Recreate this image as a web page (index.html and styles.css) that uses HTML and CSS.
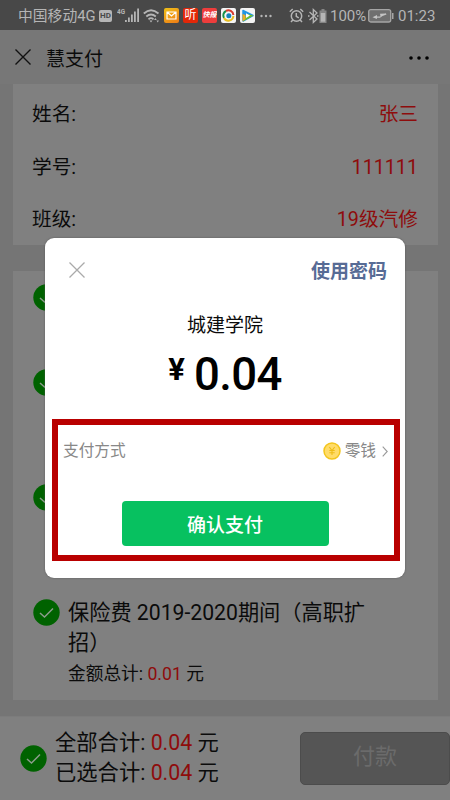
FILE: index.html
```html
<!DOCTYPE html>
<html lang="zh-CN">
<head>
<meta charset="utf-8">
<title>慧支付</title>
<link rel="stylesheet" href="styles.css">
</head>
<body>
<svg width="0" height="0" class="defs">
  <symbol id="check" viewBox="0 0 27 27"><circle cx="13.5" cy="13.5" r="13.2" fill="#006200"/><path d="M7 14l4.500 4L20 9.500" fill="none" stroke="#8c9c8c" stroke-width="1.500"/></symbol>
</svg>
<div class="screen">
  <header class="status">
    <span class="carrier">中国移动4G</span>
    <span class="hd">HD</span>
    <svg class="signal" width="24" height="16" viewBox="0 0 24 16"><text x="0" y="7" font-size="7.500" font-weight="700" textLength="8" lengthAdjust="spacingAndGlyphs" fill="#b5b5b5">4G</text><g fill="#b5b5b5"><path d="M8 13h1.800v2H8zM11 10.500h1.800V15H11zM14 7.500h1.800V15H14zM17 4.500h1.800V15H17zM20.200 1.500H22V15h-1.800z"/></g></svg>
    <svg class="wifi" width="17" height="16" viewBox="0 0 17 16"><g fill="none" stroke="#b5b5b5" stroke-width="1.800"><path d="M.8 5.500Q8 -1 15.500 5.500M3.300 8.500Q8 4.500 12.800 8.500M5.500 11.300Q8 9 10.500 11.300"/></g><path d="M6.500 12.600h3L8 14.500zM11 12l1.500-2 1.200 2zM13.500 12.500h2.500L14.700 14.500z" fill="#b5b5b5"/></svg>
    <span class="app mail"><svg width="15" height="15" viewBox="0 0 15 15"><path d="M3 4h9v7H3zM3 4l4.500 4L12 4" fill="none" stroke="#fff" stroke-width="1.200"/></svg></span>
    <span class="app listen">听</span>
    <span class="app quick">快报</span>
    <span class="app white"><svg width="15" height="15" viewBox="0 0 15 15"><g fill="none" stroke-width="2"><path d="M3 10A5 5 0 0 1 5 3" stroke="#168f48"/><path d="M5 3A5 5 0 0 1 12.400 7" stroke="#d73a2d"/><path d="M12.400 8A5 5 0 0 1 3 10" stroke="#e8bd20"/></g><circle cx="7.800" cy="7.800" r="2.500" fill="#1583ba"/></svg></span>
    <span class="app white"><svg width="15" height="15" viewBox="0 0 15 15"><path d="M3 2.500L13 7.500 3 13z" fill="#2396e5" stroke="#2396e5" stroke-width="1.500" stroke-linejoin="round"/><path d="M3 13.500L13.500 7.500 7 6z" fill="#74be28"/><path d="M2.500 6l3 1v4l-3 2.500z" fill="#efac24"/><path d="M6 5.300l4 2.300-4 2.400z" fill="#fff"/></svg></span>
    <svg class="more" width="12" height="4" viewBox="0 0 12 4"><g fill="#b5b5b5"><circle cx="1.500" cy="2" r="1.200"/><circle cx="6" cy="2" r="1.200"/><circle cx="10.500" cy="2" r="1.200"/></g></svg>
    <svg class="alarm" width="15" height="15" viewBox="0 0 15 15"><g fill="none" stroke="#b5b5b5" stroke-width="1.500"><circle cx="7.500" cy="8" r="5.200"/><path d="M7.300 5v3.300l2.500 1.600M.8 3.700L3.700 1M14.200 3.700L11.300 1M3.800 12L2 14M11.200 12l1.800 2"/></g></svg>
    <svg class="bt" width="19" height="16" viewBox="0 0 19 16"><path d="M1.500 4l7.500 7-3.700 3.500V1.500L9 5l-7.500 7M0 8h1.500M9 8h1.500" fill="none" stroke="#b5b5b5" stroke-width="1.300"/><path d="M13.500 1h3v1.500h2V15h-7V2.500h2z" fill="#858585"/><path d="M12.800 5h4.400v8.700h-4.400z" fill="#b5b5b5"/></svg>
    <span class="percent">100%</span>
    <svg class="battery" width="26" height="14" viewBox="0 0 26 14"><rect x=".7" y=".7" width="22" height="12.300" rx="2" fill="#6f6f6f" stroke="#a5a5a5" stroke-width="1.300"/><path d="M24 4h1.500v6H24z" fill="#a5a5a5"/><path d="M4.500 8.300L9 6v1.400h3.500L12 4.800l5.500-.3V3.800L18.500 5.500l-4 1.500L12 8.700H9V10z" fill="#c4c4c4"/></svg>
    <span class="clock">01:23</span>
  </header>
  <nav class="nav">
    <svg width="18" height="18" viewBox="0 0 18 18"><path d="M1.500 1.500l15 15M16.500 1.500l-15 15" stroke="#111" stroke-width="1.400"/></svg>
    <span class="title">慧支付</span>
    <svg class="dots" width="20" height="6" viewBox="0 0 20 6"><circle cx="2" cy="3" r="1.800"/><circle cx="10" cy="3" r="1.800"/><circle cx="18" cy="3" r="1.800"/></svg>
  </nav>
  <main class="content">
    <section class="card info">
      <div class="row"><span>姓名:</span><span class="val">张三</span></div>
      <div class="row"><span>学号:</span><span class="val">111111</span></div>
      <div class="row"><span>班级:</span><span class="val">19级汽修</span></div>
    </section>
    <section class="card fees">
      <div class="fee short"><svg class="check"><use href="#check"/></svg></div>
      <div class="fee tall"><svg class="check"><use href="#check"/></svg></div>
      <div class="fee tall"><svg class="check"><use href="#check"/></svg></div>
      <div class="fee"><svg class="check"><use href="#check"/></svg>
        <div class="desc"><div class="name">保险费 2019-2020期间（高职扩<br>招）</div><div class="sum">金额总计: <b>0.01</b> 元</div></div>
      </div>
    </section>
  </main>
  <footer class="footer">
    <svg class="check"><use href="#check"/></svg>
    <div class="totals"><div>全部合计: <b>0.04</b> 元</div><div>已选合计: <b>0.04</b> 元</div></div>
    <div class="pay">付款</div>
  </footer>
  <section class="modal">
    <div class="modal-head">
      <svg width="18" height="18" viewBox="0 0 18 18"><path d="M1.500 1.500l15 15M16.500 1.500l-15 15" stroke="#aaa" stroke-width="1.300"/></svg>
      <span class="pwd">使用密码</span>
    </div>
    <div class="payee">城建学院</div>
    <div class="amount"><span class="yen">¥</span><span class="figure">0.04</span></div>
    <div class="frame">
      <div class="method"><span>支付方式</span>
        <span class="wallet"><svg width="18" height="18" viewBox="0 0 18 18"><circle cx="9" cy="9" r="8" fill="#ffdc69" stroke="#f3c51c" stroke-width="1.500"/><path d="M6.300 5L9 8.500 11.700 5M9 8.500V13M6.300 8.500h5.400M6.300 10.700h5.400" fill="none" stroke="#eebd18" stroke-width="1.100"/></svg><span>零钱</span><svg class="arrow" width="6" height="11" viewBox="0 0 6 11"><path d="M.7.7l4.500 4.800L.7 10.300" fill="none" stroke="#999" stroke-width="1.100"/></svg></span>
      </div>
      <div class="confirm">确认支付</div>
    </div>
  </section>
</div>
</body>
</html>
```
FILE: styles.css
```css
* { box-sizing: border-box; }
body { margin: 0; font-family: Roboto, "Noto Sans CJK SC", sans-serif; color: #0b0b0b; }
b { font-weight: 400; color: #8e0c0c; }
svg { display: block; flex: none; }
.defs { position: absolute; }
.screen { position: relative; width: 450px; height: 800px; overflow: hidden; background: #757575; display: flex; flex-direction: column; }
.status { height: 30px; flex: none; background: #484848; color: #b5b5b5; display: flex; align-items: center; padding: 1px 0 0 18px; white-space: nowrap; }
.carrier { width: 81px; font-size: 14.800px; line-height: 28px; padding-top: 1px; }
.hd { width: 13px; height: 12px; border-radius: 2px; background: #b5b5b5; color: #484848; font-size: 8px; line-height: 12px; font-weight: 700; text-align: center; }
.signal { margin-left: 5px; margin-top: -1px; }
.wifi { margin-left: 2px; }
.app { width: 15px; height: 15px; flex: none; margin-left: 4px; border-radius: 2px; color: #fff; text-align: center; overflow: hidden; line-height: 15px; }
.mail { background: linear-gradient(150deg, #efc019, #ef7b16); }
.listen { background: #e32708; font-size: 12px; }
.quick { background: #ed3d3c; font-size: 7px; font-style: italic; font-weight: 700; }
.white { background: #f4f4f4; }
.more { margin-left: 5px; }
.alarm { margin-left: 17px; }
.bt { margin-left: 4px; }
.percent { width: 36px; margin-left: 3px; font-size: 15px; padding-top: 1px; }
.battery { margin-left: 2px; }
.clock { margin-left: 4px; font-size: 15px; padding-top: 1px; }
.nav { height: 54px; flex: none; background: #777; display: flex; align-items: center; padding: 0 21px 0 14px; }
.title { margin-left: 14px; margin-top: 5px; font-size: 19px; line-height: 28px; font-weight: 400; }
.dots { margin-left: auto; margin-top: 2px; }
.content { flex: 1; }
.card { margin: 0 12px 0 13px; background: #808080; }
.info { height: 161px; padding: 5px 20px 0 19px; font-size: 19.700px; }
.row { display: flex; justify-content: space-between; line-height: 28px; height: 52.500px; padding-top: 12px; }
.val { color: #8e0c0c; }
.fees { height: 429px; margin-top: 26px; padding: 13px 20px 0; }
.fee { display: flex; }
.short { height: 85px; }
.tall { height: 115px; }
.check { width: 27px; height: 27px; }
.desc { margin-left: 8px; }
.name { font-size: 21.200px; line-height: 30px; margin-top: -1px; white-space: nowrap; }
.sum { font-size: 17.700px; line-height: 26px; margin-top: 3px; }
.footer { height: 84px; flex: none; background: #808080; display: flex; align-items: center; padding-left: 20px; border-top: 1px solid #7c7c7c; }
.totals { margin-left: 8px; font-size: 21.300px; line-height: 30px; white-space: nowrap; margin-top: -2px; }
.pay { width: 150px; height: 53px; margin: 0 0 1px auto; background: #555; border: 1px solid #4c4c4c; border-radius: 5px; color: #6b6b6b; font-size: 22px; line-height: 48px; text-align: center; }
.modal { position: absolute; left: 45px; top: 238px; width: 360px; height: 340px; border-radius: 9px; background: #fff; box-shadow: 0 0 2px #555; }
.modal-head { display: flex; align-items: center; justify-content: space-between; padding: 18px 18px 0 23px; }
.pwd { color: #576b95; font-size: 19px; line-height: 28px; font-weight: 700; position: relative; top: 2px; }
.payee { margin-top: 28px; text-align: center; font-size: 19px; line-height: 28px; }
.amount { display: flex; justify-content: center; margin-top: 8px; height: 54px; color: #000; font-weight: 500; }
.yen { font-size: 31px; line-height: 43px; margin-right: 9px; font-weight: 700; }
.figure { font-size: 45.500px; line-height: 54px; letter-spacing: -0.600px; }
.frame { margin: 17px 5px 0 7px; height: 142px; border: 6px solid #b90000; }
.method { display: flex; justify-content: space-between; align-items: center; padding: 14px 6px 0 5px; font-size: 15.700px; line-height: 24px; color: #888; }
.wallet { display: flex; align-items: center; gap: 4px; }
.arrow { margin-left: 2px; }
.confirm { width: 207px; height: 45px; margin: 38px 0 0 63.500px; border-radius: 4px; background: #07c160; color: #fff; font-size: 19px; line-height: 49px; font-weight: 500; text-align: center; }
```
